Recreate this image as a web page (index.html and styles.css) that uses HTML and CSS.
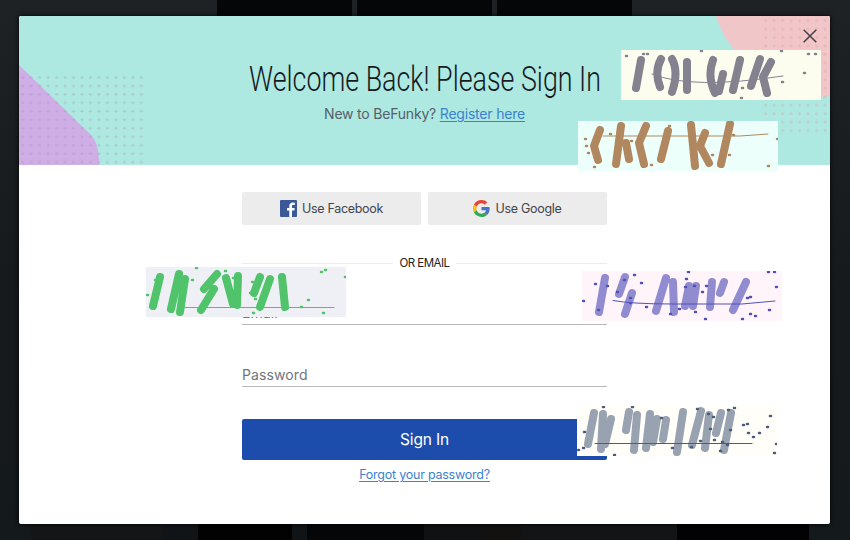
FILE: index.html
```html
<!DOCTYPE html>
<html lang="en">
<head>
<meta charset="utf-8">
<title>Sign In</title>
<link rel="stylesheet" href="styles.css">
</head>
<body>
<div class="backdrop">
  <div class="tiles-top"><i></i><i></i><i></i></div>
  <div class="tiles-bottom"></div>
</div>
<main class="modal">
  <header class="hero">
    <svg class="hero-art" width="811" height="149" viewBox="0 0 811 149" aria-hidden="true">
      <defs>
        <pattern id="dl" x="0" y="57.3" width="8.47" height="8.47" patternUnits="userSpaceOnUse"><path d="M2 4.200h3.400M3.700 2.500v3.400" stroke="#a28bbd" stroke-opacity=".32" stroke-width="1.200"/></pattern>
        <pattern id="dr" x="745" y="0" width="8.47" height="8.47" patternUnits="userSpaceOnUse"><path d="M0 4.500h3.400M1.700 2.800v3.400" stroke="#e8929b" stroke-opacity=".36" stroke-width="1.200"/></pattern>
      </defs>
      <path d="M0 49L72 119Q80 127 80 149H0z" fill="#cfaee6"/>
      <path d="M697 0C703 18 710 30 727 45C740 75 765 85 811 80V0z" fill="#f1c6c8"/>
      <path d="M0 57.3h126v91.7H0z" fill="url(#dl)"/>
      <path d="M745 0H811v118H745z" fill="url(#dr)"/>
    </svg>
    <h1><svg width="364" height="48" viewBox="0 0 364 48"><text x="6" y="34" textLength="352" lengthAdjust="spacingAndGlyphs">Welcome Back! Please Sign In</text></svg></h1>
    <p>New to BeFunky? <a href="#">Register here</a></p>
    <button class="close" aria-label="Close"><svg width="14" height="14" viewBox="0 0 14 14"><path d="M.7.7l12.6 12.6M13.3.7L.7 13.3" stroke="#454047" stroke-width="1.5"/></svg></button>
  </header>
  <form class="form">
    <div class="social">
      <button type="button"><svg width="17" height="17" viewBox="0 0 17 17"><rect width="17" height="17" rx="1" fill="#3b5998"/><path d="M9.3 17v-6.5H7V8h2.3V6.2c0-2.3 1.4-3.6 3.500-3.600l2 .1V5h-1.400c-1.100 0-1.400.5-1.400 1.400V8h2.700l-.4 2.500H12V17z" fill="#fff"/></svg><span class="fb">Use Facebook</span></button>
      <button type="button"><svg width="17" height="17" viewBox="0 0 48 48"><path fill="#ea4335" d="M24 9.5c3.5 0 6.700 1.200 9.200 3.600l6.900-6.900C35.900 2.400 30.500 0 24 0 14.600 0 6.500 5.400 2.600 13.200l8 6.200C12.400 13.700 17.700 9.500 24 9.500z"/><path fill="#4a73c4" d="M47 24.600c0-1.600-.2-3.100-.4-4.600H24v9h12.900c-.6 3-2.200 5.500-4.700 7.200l7.700 6C44.400 38 47 31.800 47 24.600z"/><path fill="#fbbc05" d="M10.500 28.600a14.500 14.500 0 010-9.200l-8-6.200a24 24 0 000 21.600z"/><path fill="#34a853" d="M24 48c6.500 0 11.900-2.100 15.900-5.800l-7.700-6C30 37.700 27.200 38.500 24 38.500c-6.300 0-11.600-4.200-13.500-9.900l-8 6.200C6.500 42.600 14.600 48 24 48z"/></svg><span class="gg">Use Google</span></button>
    </div>
    <div class="divider"><span>OR EMAIL</span></div>
    <div class="field email"><span>Email</span></div>
    <div class="field password"><span>Password</span></div>
    <button type="button" class="submit">Sign In</button>
    <a class="forgot" href="#">Forgot your password?</a>
  </form>
</main>

<!-- Floating paint swatches: loose brush marks, a thin rule and ink specks -->
<svg class="swatch s1" viewBox="0 0 200 50" aria-hidden="true">
  <g class="brush"><path d="M20 10L15 38M40 9Q33 22 39 37M51 9Q58 22 51 42M66 12L66 40M92 10Q86 26 94 43M102 24L98 41M119 10L112 40M139 9L130 36M150 12L142 27L146 43"/></g>
  <path class="rule" d="M31 24Q70 40 162 26"/>
  <path class="specks" d="M5 6h1M22 4h1M26 4h1M80 1h1M121 38h1M120 48h1M160 1h1M161 32h1M183 23h1M187 4h1M194 4h1"/>
</svg>
<svg class="swatch s2" viewBox="0 0 200 50" aria-hidden="true">
  <g class="brush"><path d="M22 9L16 25L20 39M43 5L38 43M48 22L51 38M68 5L61 22L66 43M90 10L83 38M113 4L117 45M127 12L122 25L131 42M152 3L143 43"/></g>
  <path class="rule" d="M25 15H162L190 13"/>
  <path class="specks" d="M7 18h1M8 25h1M10 32h1M16 46h1M32 13h1M53 20h1M73 44h1M91 5h1M134 34h1M151 34h1M155 14h1M190 45h1M199 18h1"/>
</svg>
<svg class="swatch s3" viewBox="0 0 200 50" aria-hidden="true">
  <g class="brush"><path d="M14 10L7 39M33 7L25 42M39 12L34 45M71 7L58 22M68 22L55 43M80 11L87 37M92 9L91 38M114 10L108 26M124 12L114 40M136 10L139 40"/></g>
  <path class="rule" d="M34 40.500H188"/>
  <path class="specks" d="M1 28h1M9 13h1M46 13h1M50 1h1M79 4h1M87 11h1M104 26h1M106 15h1M107 46h1M109 32h1M155 40h1M162 33h1M175 5h1M179 3h1M177 46h1M199 10h1"/>
</svg>
<svg class="swatch s4" viewBox="0 0 200 50" aria-hidden="true">
  <g class="brush"><path d="M23 7L17 41M43 6L37 23M50 22L43 43M84 7L74 40M91 11L92 41M107 15L103 35M114 15L111 35M130 11L128 36M142 11L138 22M164 11L151 39"/></g>
  <path class="rule" d="M31 29.500Q50 33 90 33H160L193 30"/>
  <path class="specks" d="M1 30h1M13 13h1M16 39h1M25 15h1M35 21h1M42 9h1M48 27h1M48 32h1M52 4h1M59 12h1M64 36h1M88 43h1M97 38h1M104 8h1M103 16h1M106 1h1M112 15h1M120 21h1M113 41h1M123 48h1M124 15h1M160 48h1M165 27h1M168 26h1M168 43h1M173 45h1M187 39h1M186 1h1M192 1h1M194 16h1"/>
</svg>
<svg class="swatch s5" viewBox="0 0 200 50" aria-hidden="true">
  <g class="brush"><path d="M17 7L11 38M26 8L24 43M34 13L28 38M52 6L49 24M60 9L57 44M73 8L69 42M80 13L76 36M89 14L86 33M106 6L100 46M124 5L115 39M132 9L128 42M144 7L139 27M154 7L147 44"/></g>
  <path class="rule" d="M18 37.500H175"/>
  <path class="specks" d="M1 44h1M6 42h1M7 26h1M26 1h1M37 49h1M55 1h1M84 12h1M95 42h1M114 41h1M120 3h1M123 35h1M131 8h1M133 23h1M136 11h1M137 34h1M143 45h1M145 36h1M150 39h1M151 4h1M153 24h1M157 2h1M166 19h1M170 18h1M171 27h1M176 31h1M182 27h1M190 21h1M193 10h1M197 47h1M199 38h1"/>
</svg>
</body>
</html>
```
FILE: styles.css
```css
* { box-sizing: border-box; }
body { margin: 0; width: 850px; height: 540px; overflow: hidden; display: flex; justify-content: center; padding: 16px 20px 16px 19px; font-family: Inter, "Open Sans", sans-serif; }
button { border: 0; font: inherit; padding: 0; }
.backdrop { position: absolute; inset: 0; background: linear-gradient(#1f2225, #171a1d 50%, #14191c); display: flex; flex-direction: column; justify-content: space-between; }
.tiles-top { display: flex; gap: 5px; padding-left: 217px; height: 16px; }
.tiles-top i { width: 135px; background: #050608; }
.tiles-bottom { height: 16px; margin: 0 41px 0 31px; background: linear-gradient(90deg, #141516 0 17%, #101416 17% 21.5%, #020203 21.5% 33.5%, #101416 33.5% 35.5%, #050608 35.5% 50.5%, #101112 50.5% 58%, #121110 58% 63%, #121416 63% 83%, #020204 83%); }
.modal { position: relative; width: 811px; height: 508px; background: #fff; border-radius: 2px; overflow: hidden; box-shadow: 0 0 4px #000; }
.hero { position: relative; height: 149px; background: #ade9e1; display: flex; flex-direction: column; align-items: center; padding-top: 41px; }
.hero-art { position: absolute; left: 0; top: 0; }
.hero h1 { position: relative; margin: 0; height: 47px; }
.hero h1 svg { display: block; }
.hero h1 text { font: 300 35px Roboto, sans-serif; fill: #161a1f; }
.hero p { position: relative; margin: 0; font-size: 14px; line-height: 20px; letter-spacing: -.2px; color: #566068; }
a { color: #3b82d0; text-underline-offset: 2px; }
.close { position: absolute; right: 13px; top: 13px; width: 14px; height: 14px; background: none; }
.close svg { display: block; }
.form { width: 365px; margin-left: 223px; padding-top: 27px; display: flex; flex-direction: column; }
.social { display: flex; gap: 7px; }
.social button { flex: 1; height: 33px; border-radius: 2px; background: #ececec; display: flex; align-items: center; justify-content: center; gap: 5px; font-size: 12.5px; color: #43454d; }
.fb { letter-spacing: -.3px; }
.gg { letter-spacing: -.3px; }
.divider { display: flex; align-items: center; gap: 7px; height: 18px; margin-top: 29px; font-size: 11.5px; letter-spacing: -.55px; color: #202226; }
.divider::before, .divider::after { content: ""; flex: 1; height: 1px; background: #ececec; }
.field { border-bottom: 1px solid #b9b9b9; color: #70757c; font-size: 14px; line-height: 20px; letter-spacing: .1px; }
.email { margin-top: 31px; height: 22px; }
.password { margin-top: 40px; height: 22px; }
.submit { height: 41px; margin-top: 32px; border-radius: 2px; background: #1d4dac; color: #fff; font-size: 15.5px; letter-spacing: -.15px; }
.forgot { align-self: center; margin-top: 6px; font-size: 12.5px; line-height: 18px; letter-spacing: -.23px; }
.swatch { position: absolute; width: 200px; height: 50px; overflow: hidden; }
.swatch path { fill: none; stroke: var(--ink); stroke-linecap: round; stroke-linejoin: round; }
.brush path { stroke-width: 8px; }
.swatch .rule { stroke: var(--line, var(--ink)); stroke-width: 1px; }
.swatch .specks { stroke: var(--line, var(--ink)); stroke-width: 2.5px; }
.s1 { left: 621px; top: 50px; background: #fcfdee; --ink: #85828f; }
.s2 { left: 578px; top: 121px; background: #edfffb; --ink: #b18760; }
.s3 { left: 146px; top: 267px; background: #eff0f6; --ink: #50c36b; }
.s4 { left: 582px; top: 271px; background: #fff4f9; --ink: #918cd0; --line: #5151b8; }
.s5 { left: 577px; top: 406px; background: #fffef8; --ink: #98a2b0; --line: #4c5c7c; }
```
